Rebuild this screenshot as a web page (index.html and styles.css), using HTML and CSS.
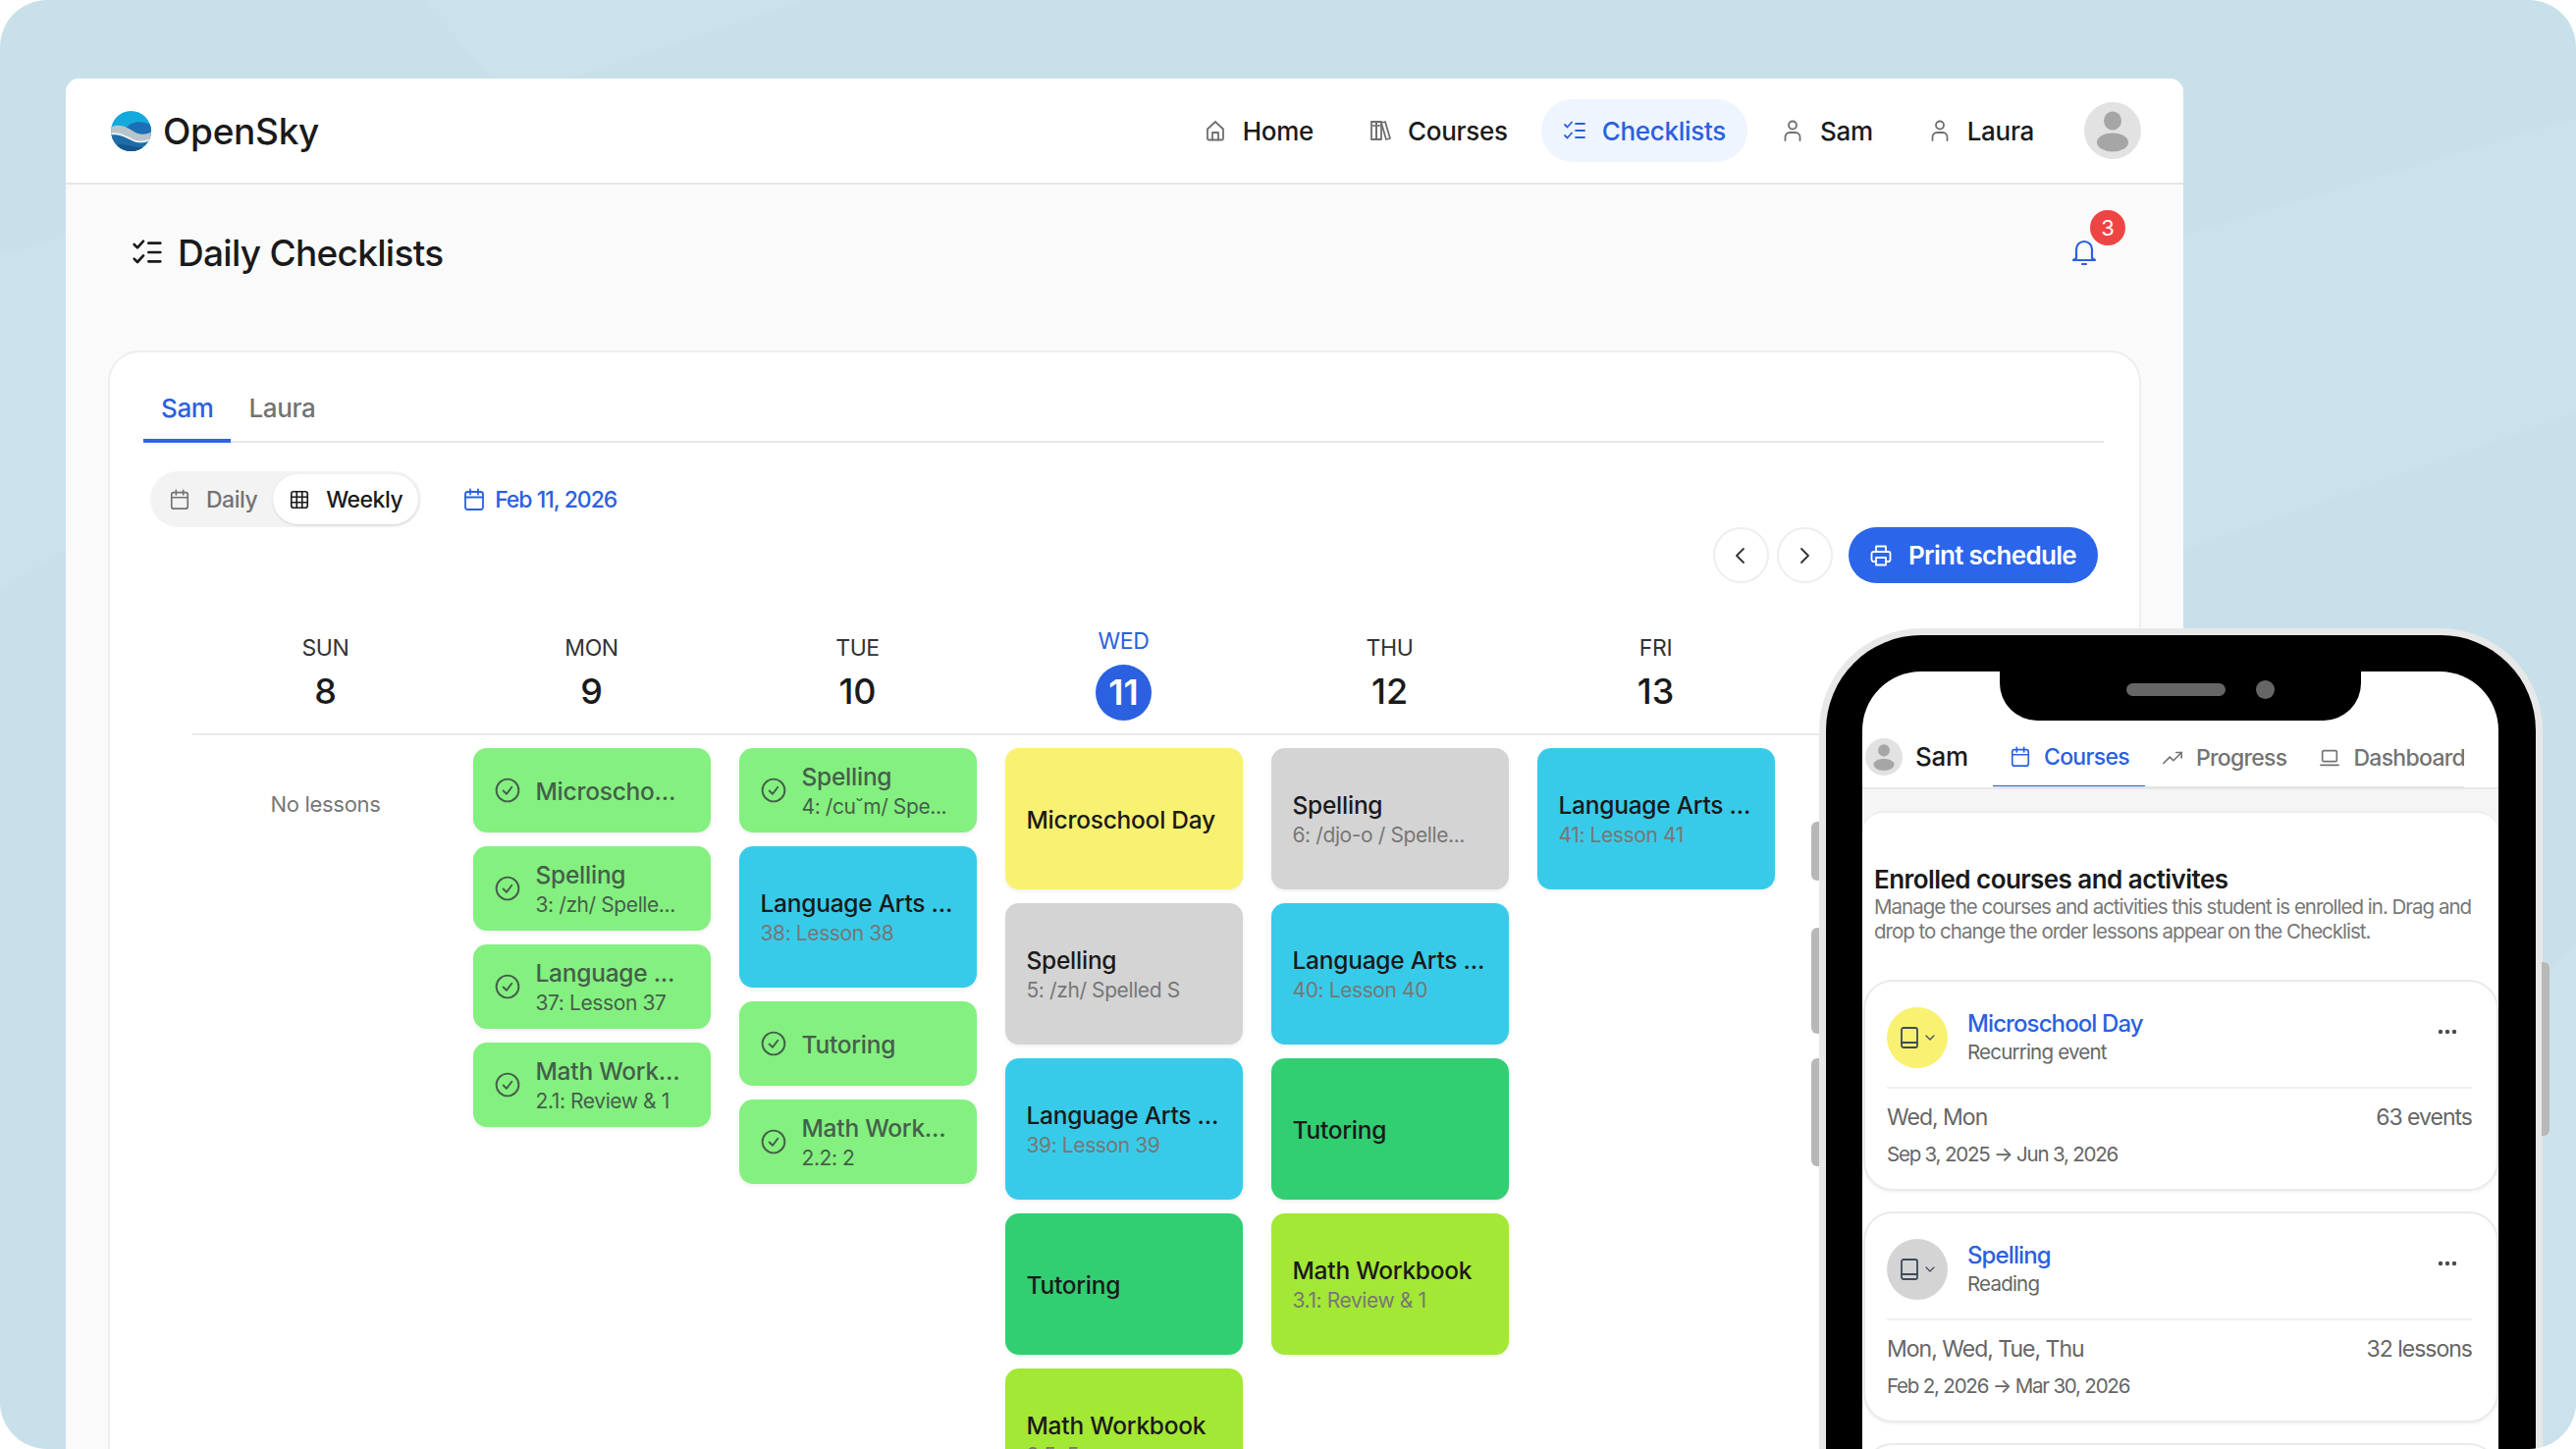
FILE: index.html
```html
<!DOCTYPE html>
<html lang="en">

<head>
  <meta charset="UTF-8" />
  <meta name="viewport" content="width=device-width, initial-scale=1.0" />
  <title>OpenSky Daily Checklists</title>

  <link rel="stylesheet" href="styles.css">
</head>

<body>
  <!-- Shared icons -->
  <svg class="defs" aria-hidden="true">
    <symbol id="i-home" viewBox="0 0 24 24"><path d="M4 10.5 12 3l8 7.5V20a1.5 1.5 0 0 1-1.5 1.5h-13A1.5 1.5 0 0 1 4 20z" /><path d="M9 21.5V14h6v7.5" /></symbol>
    <symbol id="i-books" viewBox="0 0 24 24"><rect x="3" y="3" width="5" height="18" /><rect x="8" y="3" width="5" height="18" /><path d="m13 4 4-1 5 17-4 1zM5 7h1M10 7h1" /></symbol>
    <symbol id="i-check-list" viewBox="0 0 24 24"><path d="m2 6 2.5 2.5L9 3.5" /><path d="m2 17 2.5 2.5 4.5-5" /><path d="M13 5h9M13 12h9M13 19h9" /></symbol>
    <symbol id="i-user" viewBox="0 0 24 24"><circle cx="12" cy="6.5" r="4" /><path d="M4.5 22v-3.5a4.5 4.5 0 0 1 4.5-4.5h6a4.5 4.5 0 0 1 4.5 4.5V22" /></symbol>
    <symbol id="i-cal" viewBox="0 0 24 24"><rect x="3" y="4" width="18" height="18" rx="2.5" /><path d="M3 9.5h18M8 1.5v5M16 1.5v5" /></symbol>
    <symbol id="i-grid" viewBox="0 0 24 24"><rect x="3" y="3" width="18" height="18" rx="2.5" /><path d="M3 9h18M3 15h18M9 3v18M15 3v18" /></symbol>
    <symbol id="i-done" viewBox="0 0 24 24"><circle cx="12" cy="12" r="10.5" /><path d="m8 12.5 3 3 5-6.5" /></symbol>
    <symbol id="i-printer" viewBox="0 0 24 24"><path d="M7 8V2.5h10V8" /><path d="M7 18H4.5a2 2 0 0 1-2-2v-6a2 2 0 0 1 2-2h15a2 2 0 0 1 2 2v6a2 2 0 0 1-2 2H17" /><rect x="7" y="14" width="10" height="7.5" /></symbol>
    <symbol id="i-trend" viewBox="0 0 24 24"><path d="m2 18 7-7 4 4 9-9" /><path d="M16 6h6v6" /></symbol>
    <symbol id="i-laptop" viewBox="0 0 24 24"><rect x="4" y="4" width="16" height="12" rx="1.5" /><path d="M2 20h20" /></symbol>
    <symbol id="i-book" viewBox="0 0 24 24"><rect x="4" y="2" width="16" height="20" rx="2" /><path d="M4 17h16" /></symbol>
    <symbol id="i-down" viewBox="0 0 24 24"><path d="m6 9 6 6 6-6" /></symbol>
    <symbol id="i-avatar" viewBox="0 0 58 58"><circle cx="29" cy="29" r="29" class="avatar-bg" /><ellipse cx="29" cy="19" rx="9" ry="9.5" class="avatar-fg" /><ellipse cx="29" cy="41" rx="16" ry="9.5" class="avatar-fg" /></symbol>
  </svg>

  <div class="stage">
    <!-- Faint shapes in the backdrop -->
    <svg class="backdrop" viewBox="0 0 2624 1476" aria-hidden="true">
      <polygon points="430,0 820,0 520,100" />
      <polygon points="0,260 67,240 67,560 0,600" />
      <polygon points="2224,240 2624,120 2624,420 2224,560" />
      <polygon points="2590,1000 2624,960 2624,1476 2590,1476" />
    </svg>

    <div class="window">
      <header class="topbar">
        <div class="brand">
          <svg class="brand-logo" viewBox="0 0 40 40">
            <defs><clipPath id="logo-clip"><circle cx="20" cy="20" r="20" /></clipPath></defs>
            <g clip-path="url(#logo-clip)">
              <rect width="40" height="40" fill="#14a9dc" />
              <path d="M14 18C20 10 30 9 40 14V30H14z" fill="#1c6fb5" />
              <path d="M0 16C8 12 16 16 22 20C28 24 34 24 40 21V31H0z" fill="#b9c3cb" />
              <path d="M0 24C8 22 16 27 22 30C28 33 34 32 40 29V40H0z" fill="#1d6ca8" />
              <path d="M0 23C8 21 16 26 22 29C28 32 34 31 40 28" fill="none" stroke="#eef2f4" stroke-width="1.5" />
              <path d="M6 34C14 32 22 37 34 36V40H6z" fill="#14568c" />
            </g>
          </svg>
          <span class="brand-name">OpenSky</span>
        </div>
        <nav class="nav">
          <a class="nav-item"><svg class="icon"><use href="#i-home" /></svg>Home</a>
          <a class="nav-item"><svg class="icon"><use href="#i-books" /></svg>Courses</a>
          <a class="nav-item active"><svg class="icon"><use href="#i-check-list" /></svg>Checklists</a>
          <a class="nav-item"><svg class="icon"><use href="#i-user" /></svg>Sam</a>
          <a class="nav-item"><svg class="icon"><use href="#i-user" /></svg>Laura</a>
          <svg class="avatar"><use href="#i-avatar" /></svg>
        </nav>
      </header>

      <main class="main">
        <div class="title-row">
          <h1 class="title"><svg class="icon title-icon"><use href="#i-check-list" /></svg>Daily Checklists</h1>
          <div class="bell">
            <svg class="bell-icon" viewBox="0 0 26 28"><path d="M5 20V11a8 8 0 0 1 16 0v9l3 2H2z" /><path d="M11 26h4" /></svg>
            <span class="badge">3</span>
          </div>
        </div>

        <section class="card">
          <div class="tabs">
            <span class="tab active">Sam</span>
            <span class="tab">Laura</span>
          </div>

          <div class="toolbar">
            <div class="toggle">
              <span class="toggle-item"><svg class="icon"><use href="#i-cal" /></svg>Daily</span>
              <span class="toggle-item on"><svg class="icon"><use href="#i-grid" /></svg>Weekly</span>
            </div>
            <span class="date"><svg class="icon"><use href="#i-cal" /></svg>Feb 11, 2026</span>
          </div>

          <div class="actions">
            <button class="round"><svg class="icon"><path d="m15 5-7 7 7 7" /></svg></button>
            <button class="round"><svg class="icon"><path d="m9 5 7 7-7 7" /></svg></button>
            <button class="print"><svg class="icon"><use href="#i-printer" /></svg>Print schedule</button>
          </div>

          <div class="calendar">
            <div class="week-head">
              <div class="day"><span class="day-name">SUN</span><span class="day-num">8</span></div>
              <div class="day"><span class="day-name">MON</span><span class="day-num">9</span></div>
              <div class="day"><span class="day-name">TUE</span><span class="day-num">10</span></div>
              <div class="day today"><span class="day-name">WED</span><span class="day-num">11</span></div>
              <div class="day"><span class="day-name">THU</span><span class="day-num">12</span></div>
              <div class="day"><span class="day-name">FRI</span><span class="day-num">13</span></div>
              <div class="day"><span class="day-name">SAT</span><span class="day-num">14</span></div>
            </div>

            <div class="week-body">
              <div class="col"><p class="empty">No lessons</p></div>

              <div class="col">
                <div class="lesson done"><svg class="icon"><use href="#i-done" /></svg><div class="lesson-text"><b>Microscho...</b></div></div>
                <div class="lesson done"><svg class="icon"><use href="#i-done" /></svg><div class="lesson-text"><b>Spelling</b><small>3: /zh/ Spelle...</small></div></div>
                <div class="lesson done"><svg class="icon"><use href="#i-done" /></svg><div class="lesson-text"><b>Language ...</b><small>37: Lesson 37</small></div></div>
                <div class="lesson done"><svg class="icon"><use href="#i-done" /></svg><div class="lesson-text"><b>Math Work...</b><small>2.1: Review &amp; 1</small></div></div>
              </div>

              <div class="col">
                <div class="lesson done"><svg class="icon"><use href="#i-done" /></svg><div class="lesson-text"><b>Spelling</b><small>4: /cu˘m/ Spe...</small></div></div>
                <div class="lesson tall cyan"><div class="lesson-text"><b>Language Arts ...</b><small>38: Lesson 38</small></div></div>
                <div class="lesson done"><svg class="icon"><use href="#i-done" /></svg><div class="lesson-text"><b>Tutoring</b></div></div>
                <div class="lesson done"><svg class="icon"><use href="#i-done" /></svg><div class="lesson-text"><b>Math Work...</b><small>2.2: 2</small></div></div>
              </div>

              <div class="col">
                <div class="lesson tall yellow"><div class="lesson-text"><b>Microschool Day</b></div></div>
                <div class="lesson tall grey"><div class="lesson-text"><b>Spelling</b><small>5: /zh/ Spelled S</small></div></div>
                <div class="lesson tall cyan"><div class="lesson-text"><b>Language Arts ...</b><small>39: Lesson 39</small></div></div>
                <div class="lesson tall green"><div class="lesson-text"><b>Tutoring</b></div></div>
                <div class="lesson tall lime"><div class="lesson-text"><b>Math Workbook</b><small>3.5: 5</small></div></div>
              </div>

              <div class="col">
                <div class="lesson tall grey"><div class="lesson-text"><b>Spelling</b><small>6: /djo-o / Spelle...</small></div></div>
                <div class="lesson tall cyan"><div class="lesson-text"><b>Language Arts ...</b><small>40: Lesson 40</small></div></div>
                <div class="lesson tall green"><div class="lesson-text"><b>Tutoring</b></div></div>
                <div class="lesson tall lime"><div class="lesson-text"><b>Math Workbook</b><small>3.1: Review &amp; 1</small></div></div>
              </div>

              <div class="col">
                <div class="lesson tall cyan"><div class="lesson-text"><b>Language Arts ...</b><small>41: Lesson 41</small></div></div>
              </div>

              <div class="col"></div>
            </div>
          </div>
        </section>
      </main>
    </div>

    <!-- Phone mockup lies over the window -->
    <div class="phone">
      <span class="side-btn btn-a"></span>
      <span class="side-btn btn-b"></span>
      <span class="side-btn btn-c"></span>
      <span class="side-btn btn-d"></span>
      <div class="bezel">
        <div class="screen">
          <div class="notch"><span class="speaker"></span><span class="camera"></span></div>

          <div class="phone-head">
            <div class="phone-user"><svg class="phone-avatar" viewBox="0 0 58 58"><use href="#i-avatar" /></svg>Sam</div>
            <div class="phone-tabs">
              <span class="phone-tab active"><svg class="icon"><use href="#i-cal" /></svg>Courses</span>
              <span class="phone-tab"><svg class="icon"><use href="#i-trend" /></svg>Progress</span>
              <span class="phone-tab"><svg class="icon"><use href="#i-laptop" /></svg>Dashboard</span>
            </div>
          </div>

          <div class="phone-body">
            <div class="enrolled">
              <h2>Enrolled courses and activites</h2>
              <p>Manage the courses and activities this student is enrolled in. Drag and drop to change the order lessons appear on the Checklist.</p>

              <article class="course">
                <div class="course-top">
                  <span class="course-badge yellow"><svg class="icon"><use href="#i-book" /></svg><svg class="icon chev"><use href="#i-down" /></svg></span>
                  <div class="course-name"><a>Microschool Day</a><span>Recurring event</span></div>
                  <svg class="dots" viewBox="0 0 20 6"><circle cx="3" cy="3" r="2.2" /><circle cx="10" cy="3" r="2.2" /><circle cx="17" cy="3" r="2.2" /></svg>
                </div>
                <div class="course-foot">
                  <div class="course-row"><span>Wed, Mon</span><span>63 events</span></div>
                  <div class="course-dates">Sep 3, 2025 → Jun 3, 2026</div>
                </div>
              </article>

              <article class="course">
                <div class="course-top">
                  <span class="course-badge grey"><svg class="icon"><use href="#i-book" /></svg><svg class="icon chev"><use href="#i-down" /></svg></span>
                  <div class="course-name"><a>Spelling</a><span>Reading</span></div>
                  <svg class="dots" viewBox="0 0 20 6"><circle cx="3" cy="3" r="2.2" /><circle cx="10" cy="3" r="2.2" /><circle cx="17" cy="3" r="2.2" /></svg>
                </div>
                <div class="course-foot">
                  <div class="course-row"><span>Mon, Wed, Tue, Thu</span><span>32 lessons</span></div>
                  <div class="course-dates">Feb 2, 2026 → Mar 30, 2026</div>
                </div>
              </article>

              <article class="course"></article>
            </div>
          </div>
        </div>
      </div>
    </div>
  </div>
</body>

</html>
```

FILE: styles.css
```css
* {
  box-sizing: border-box;
}

body {
  margin: 0;
  background: #fff;
  font-family: Inter, "Liberation Sans", sans-serif;
  color: #1a1a1a;
}

.defs {
  position: absolute;
  width: 0;
  height: 0;
}

/* generic stroke icon */
.icon {
  width: 24px;
  height: 24px;
  flex: none;
  fill: none;
  stroke: currentColor;
  stroke-width: 1.8;
  stroke-linecap: round;
  stroke-linejoin: round;
}

.avatar-bg {
  fill: #e2e2e2;
}

.avatar-fg {
  fill: #a6a6a6;
}

/* page backdrop */
.stage {
  position: relative;
  width: 2624px;
  height: 1476px;
  padding: 80px 400px 0 67px;
  overflow: hidden;
  border-radius: 48px;
  background: #c8e0ea;
}

.backdrop {
  position: absolute;
  inset: 0;
  width: 100%;
  height: 100%;
  fill: #cbe2ec;
}

/* app window */
.window {
  position: relative;
  width: 2157px;
  height: 1500px;
  border-radius: 14px 14px 0 0;
  background: #fafafa;
  overflow: hidden;
}

.topbar {
  display: flex;
  justify-content: space-between;
  align-items: center;
  height: 108px;
  padding: 0 43px 0 46px;
  background: #fff;
  border-bottom: 2px solid #e6e6e6;
}

.brand {
  display: flex;
  align-items: center;
  gap: 12px;
}

.brand-logo {
  width: 41px;
  height: 41px;
}

.brand-name {
  font-size: 37px;
  font-weight: 500;
  letter-spacing: -0.3px;
}

.nav {
  display: flex;
  align-items: center;
  gap: 12px;
}

.nav-item {
  display: flex;
  align-items: center;
  gap: 16px;
  height: 64px;
  padding: 0 22px;
  border-radius: 32px;
  font-size: 26px;
  font-weight: 500;
  letter-spacing: -0.3px;
}

.nav-item .icon {
  color: #6f6f6f;
}

.nav-item.active {
  background: #eef5ff;
  color: #2b60e0;
}

.nav-item.active .icon {
  color: #2b60e0;
}

.avatar {
  width: 58px;
  height: 58px;
  margin-left: 17px;
}

.main {
  padding: 39px 43px 0;
}

.title-row {
  display: flex;
  justify-content: space-between;
  align-items: center;
  height: 60px;
  margin-bottom: 70px;
  padding: 0 45px 0 24px;
}

.title {
  display: flex;
  align-items: center;
  gap: 15px;
  margin: 0;
  font-size: 37px;
  font-weight: 500;
  letter-spacing: -0.7px;
}

.title-icon {
  width: 32px;
  height: 32px;
  color: #1a1a1a;
  stroke-width: 2;
}

.bell {
  position: relative;
  width: 26px;
  height: 28px;
}

.bell-icon {
  display: block;
  width: 26px;
  height: 28px;
  fill: none;
  stroke: #2b60e0;
  stroke-width: 2.2;
  stroke-linecap: round;
  stroke-linejoin: round;
}

.badge {
  position: absolute;
  left: 19px;
  top: -29px;
  width: 36px;
  height: 36px;
  border-radius: 50%;
  background: #ef4444;
  color: #fff;
  font-size: 22px;
  line-height: 36px;
  text-align: center;
}

/* main card */
.card {
  min-height: 1200px;
  padding: 22px 36px 0 34px;
  background: #fff;
  border: 2px solid #eeeeee;
  border-radius: 32px 32px 0 0;
}

.tabs {
  display: flex;
  gap: 0;
  border-bottom: 2px solid #e6e6e6;
}

.tab {
  height: 70px;
  margin-bottom: -2px;
  padding: 0 18px;
  line-height: 70px;
  font-size: 26px;
  font-weight: 500;
  letter-spacing: -0.4px;
  color: #737373;
}

.tab.active {
  border-bottom: 4px solid #2b65ea;
  color: #2b60e0;
}

.toolbar {
  display: flex;
  align-items: center;
  gap: 42px;
  margin: 29px 0 0 7px;
}

.toggle {
  display: flex;
  align-items: center;
  height: 57px;
  padding: 3px;
  border-radius: 29px;
  background: #f3f3f3;
}

.toggle-item {
  display: flex;
  align-items: center;
  gap: 16px;
  height: 51px;
  padding: 0 16px;
  border-radius: 26px;
  font-size: 23px;
  font-weight: 500;
  letter-spacing: -0.5px;
  color: #737373;
}

.toggle-item .icon {
  width: 22px;
  height: 22px;
}

.toggle-item.on {
  background: #fff;
  color: #1a1a1a;
  box-shadow: 0 1px 3px rgba(0, 0, 0, 0.12);
}

.date {
  display: flex;
  align-items: center;
  gap: 9px;
  font-size: 23px;
  font-weight: 500;
  letter-spacing: -1px;
  color: #2b60e0;
}

.actions {
  display: flex;
  justify-content: flex-end;
  gap: 8px;
  height: 57px;
  margin-right: 6px;
}

.round {
  display: flex;
  align-items: center;
  justify-content: center;
  width: 57px;
  height: 57px;
  padding: 0;
  border: 2px solid #eeeeee;
  border-radius: 50%;
  background: #fff;
  color: #333;
}

.print {
  display: flex;
  align-items: center;
  gap: 16px;
  height: 57px;
  margin-left: 8px;
  padding: 0 22px 0 21px;
  border: none;
  border-radius: 29px;
  background: #2b65ea;
  color: #fff;
  font-family: inherit;
  font-size: 26px;
  font-weight: 600;
  letter-spacing: -0.7px;
}

/* week view */
.calendar {
  width: 1897px;
  margin: 51px 0 0 50px;
}

.week-head {
  display: grid;
  grid-template-columns: repeat(7, 271px);
  align-items: start;
  padding-bottom: 13px;
  border-bottom: 2px solid #eaeaea;
}

.day {
  display: flex;
  flex-direction: column;
  align-items: center;
}

.day-name {
  font-size: 23px;
  line-height: 30px;
  color: #333;
  letter-spacing: -0.4px;
}

.day-num {
  margin-top: 7px;
  font-size: 36px;
  line-height: 44px;
  font-weight: 500;
}

.today {
  margin-top: -7px;
}

.today .day-name {
  color: #2b60e0;
}

.today .day-num {
  width: 57px;
  height: 57px;
  margin-top: 9px;
  border-radius: 50%;
  background: #2b60e0;
  color: #fff;
  line-height: 57px;
  text-align: center;
  font-weight: 600;
}

.week-body {
  display: grid;
  grid-template-columns: repeat(7, 271px);
  padding-top: 13px;
}

.col {
  display: flex;
  flex-direction: column;
  gap: 14px;
  padding: 0 14.5px;
}

.empty {
  margin: 44px 0 0;
  text-align: center;
  font-size: 22px;
  letter-spacing: -0.3px;
  color: #777;
}

.lesson {
  display: flex;
  align-items: center;
  gap: 16px;
  height: 86px;
  padding: 0 0 0 22px;
  border-radius: 14px;
  box-shadow: 0 2px 4px rgba(0, 0, 0, 0.06);
  white-space: nowrap;
  overflow: hidden;
}

.lesson.tall {
  height: 144px;
}

.lesson-text {
  display: flex;
  flex-direction: column;
  min-width: 0;
  padding-top: 2px;
}

.lesson b {
  font-size: 24.5px;
  line-height: 31px;
  font-weight: 500;
  letter-spacing: -0.25px;
}

.lesson small {
  font-size: 21px;
  line-height: 30px;
  letter-spacing: -0.4px;
  color: #777;
}

.lesson.done {
  background: #84f080;
  color: #44604a;
}

.lesson.done .icon {
  width: 26px;
  height: 26px;
}

.lesson.done b,
.lesson.done small {
  color: #44604a;
}

.yellow {
  background: #f9f171;
}

.grey {
  background: #d4d4d4;
}

.cyan {
  background: #38cbe9;
}

.green {
  background: #32ce72;
}

.lime {
  background: #a3e835;
}

/* phone mockup */
.phone {
  position: absolute;
  left: 1853px;
  top: 640px;
  width: 737px;
  height: 960px;
  padding: 7px;
  border-radius: 104px;
  background: #e8e8e8;
}

.side-btn {
  position: absolute;
  width: 8px;
  background: #b8b8b8;
}

.btn-a,
.btn-b,
.btn-c {
  left: -8px;
  border-radius: 6px 0 0 6px;
}

.btn-a {
  top: 197px;
  height: 60px;
}

.btn-b {
  top: 305px;
  height: 108px;
}

.btn-c {
  top: 438px;
  height: 110px;
}

.btn-d {
  left: 736px;
  top: 340px;
  height: 177px;
  border-radius: 0 6px 6px 0;
}

.bezel {
  height: 100%;
  padding: 37px 38px 0 37px;
  border-radius: 97px;
  background: #000;
}

.screen {
  position: relative;
  height: 100%;
  padding-top: 57px;
  overflow: hidden;
  border-radius: 60px 60px 0 0;
  background: #fff;
}

.notch {
  position: absolute;
  left: 140px;
  top: 0;
  display: flex;
  align-items: center;
  gap: 31px;
  width: 368px;
  height: 50px;
  padding: 0 0 14px 129px;
  border-radius: 0 0 38px 38px;
  background: #000;
}

.speaker {
  width: 101px;
  height: 13px;
  border-radius: 7px;
  background: #666;
}

.camera {
  width: 19px;
  height: 19px;
  border-radius: 50%;
  background: #666;
}

.phone-head {
  display: flex;
  align-items: stretch;
  height: 63px;
  border-bottom: 2px solid #e8e8e8;
}

.phone-user {
  display: flex;
  align-items: center;
  gap: 13px;
  width: 133px;
  padding: 0 0 2px 3px;
  font-size: 26px;
  font-weight: 500;
  letter-spacing: -0.3px;
}

.phone-avatar {
  width: 38px;
  height: 38px;
}

.phone-tabs {
  display: flex;
  width: 480px;
  overflow: hidden;
  border-bottom: 2px solid #e4e4e4;
  margin-bottom: -1px;
}

.phone-tab {
  display: flex;
  align-items: center;
  flex: none;
  gap: 13px;
  height: 62px;
  padding: 0 16px 0 17px;
  font-size: 23px;
  font-weight: 500;
  letter-spacing: -0.7px;
  color: #737373;
}

.phone-tab.active {
  border-bottom: 3px solid #2b60e0;
  color: #2b60e0;
}

.phone-tab .icon {
  width: 22px;
  height: 22px;
}

.phone-body {
  padding-top: 22px;
  background: #f5f5f5;
}

.enrolled {
  padding-top: 53px;
  background: #fff;
  border-top: 2px solid #ececec;
  border-radius: 22px 22px 0 0;
}

.enrolled h2 {
  margin: 0;
  padding-left: 12px;
  font-size: 26px;
  line-height: 30px;
  font-weight: 600;
  letter-spacing: -0.55px;
}

.enrolled p {
  margin: 0 0 37px;
  padding: 0 10px 0 12px;
  font-size: 20.5px;
  line-height: 25px;
  letter-spacing: -1px;
  color: #777;
}

.course {
  height: 215px;
  margin: 0 0 21px 1px;
  padding: 27px 25px 0 22px;
  border: 2px solid #eaeaea;
  border-radius: 30px;
  box-shadow: 0 2px 3px rgba(0, 0, 0, 0.05);
}

.course-top {
  display: flex;
  align-items: center;
  gap: 20px;
  height: 82px;
  padding-bottom: 20px;
  border-bottom: 2px solid #f0f0f0;
}

.course-badge {
  display: flex;
  align-items: center;
  justify-content: center;
  gap: 1px;
  width: 62px;
  height: 62px;
  flex: none;
  border-radius: 50%;
  color: #3d4a5c;
}

.course-badge .chev {
  width: 16px;
  height: 16px;
}

.course-name {
  display: flex;
  flex-direction: column;
  flex: 1;
  font-size: 20.5px;
  line-height: 28px;
  letter-spacing: -0.8px;
  color: #666;
}

.course-name a {
  font-size: 24px;
  line-height: 30px;
  font-weight: 500;
  letter-spacing: -0.9px;
  color: #2b60e0;
}

.dots {
  align-self: flex-start;
  width: 20px;
  height: 6px;
  margin: 21px 15px 0 0;
  fill: #4b4b4b;
}

.course-foot {
  padding-top: 14px;
}

.course-row {
  display: flex;
  justify-content: space-between;
  font-size: 23px;
  line-height: 30px;
  letter-spacing: -1px;
  color: #666;
}

.course-dates {
  margin-top: 9px;
  font-size: 20.5px;
  line-height: 28px;
  letter-spacing: -1.2px;
  color: #666;
}
```
